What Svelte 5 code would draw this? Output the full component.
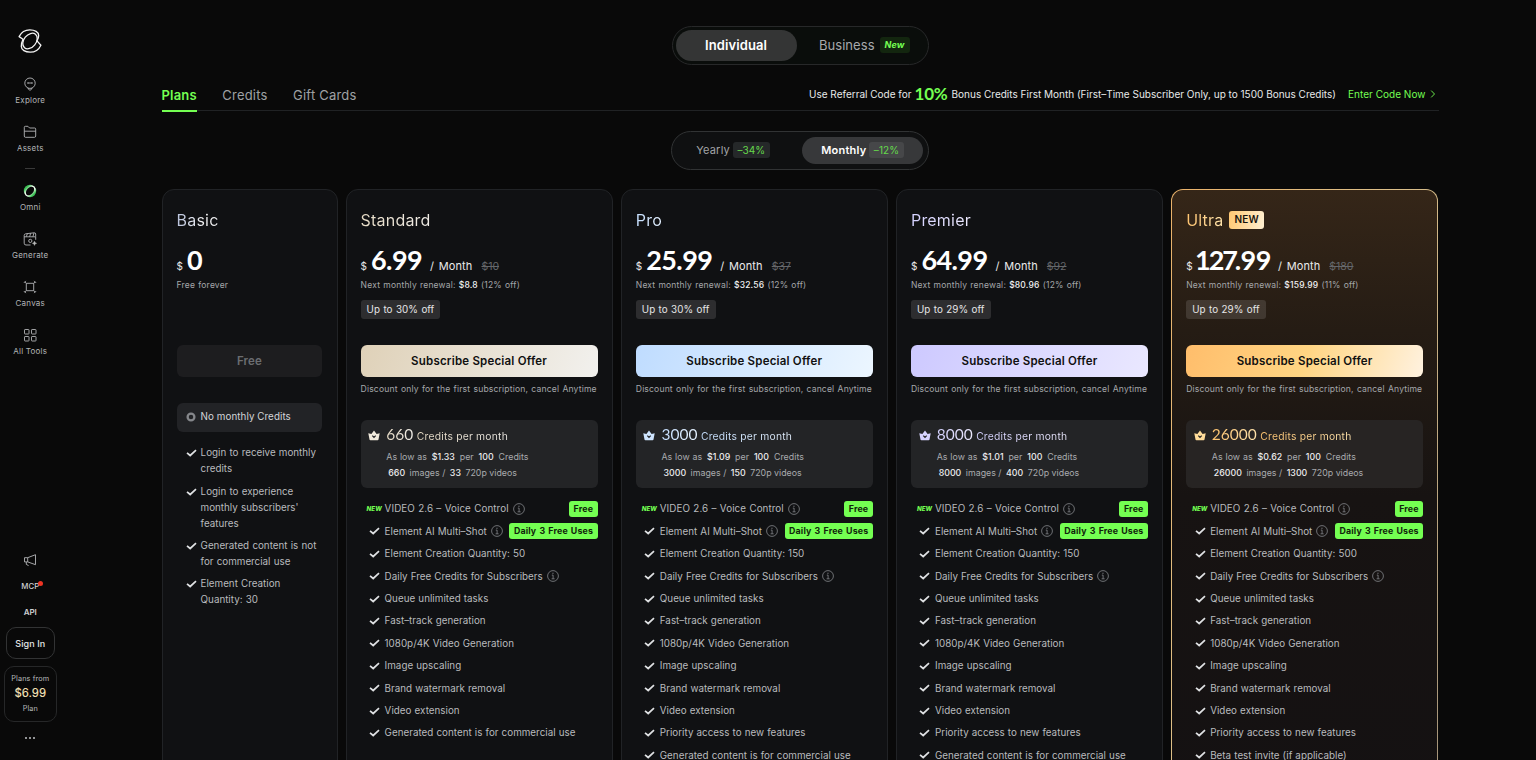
<script>
  const tail = ['Queue unlimited tasks', 'Fast–track generation', '1080p/4K Video Generation', 'Image upscaling', 'Brand watermark removal', 'Video extension'];
  const plans = [
    { id: 'standard', name: 'Standard', price: '6.99', old: '$10', renew: '$8.8', pct: '12', off: '30', credits: '660', per: '$1.33', videos: '33', qty: 50, more: ['Generated content is for commercial use'] },
    { id: 'pro', name: 'Pro', price: '25.99', old: '$37', renew: '$32.56', pct: '12', off: '30', credits: '3000', per: '$1.09', videos: '150', qty: 150, more: ['Priority access to new features', 'Generated content is for commercial use'] },
    { id: 'premier', name: 'Premier', price: '64.99', old: '$92', renew: '$80.96', pct: '12', off: '29', credits: '8000', per: '$1.01', videos: '400', qty: 150, more: ['Priority access to new features', 'Generated content is for commercial use'] },
    { id: 'ultra', name: 'Ultra', badge: 'NEW', price: '127.99', old: '$180', renew: '$159.99', pct: '11', off: '29', credits: '26000', per: '$0.62', videos: '1300', qty: 500, more: ['Priority access to new features', 'Beta test invite (if applicable)'] }
  ];
  const basic = ['Login to receive monthly credits', "Login to experience monthly subscribers'\u00a0 features", 'Generated content is not for commercial use', 'Element Creation Quantity: 30'];
</script>

{#snippet check()}
  <svg class="check" viewBox="0 0 11 8" width="11" height="8"><path d="M1 3.800 4.200 6.500 10 1.200" fill="none" stroke="#dfe1e3" stroke-width="1.700" /></svg>
{/snippet}
{#snippet info()}
  <svg class="info" viewBox="0 0 12 12" width="12" height="12" fill="none" stroke="#85888c" stroke-width=".8"><circle cx="6" cy="6" r="5.4" /><path d="M4.8 5.1h1.3v3.6M4.6 8.8h3" /><path d="M5.4 3.3h1.1" stroke-width="1.1" /></svg>
{/snippet}

<div class="page">
  <aside>
    <svg class="logo" viewBox="0 0 24 24" width="24" height="24" fill="none" stroke="#f4f4f4" stroke-width="1.3" stroke-linejoin="round">
      <path d="M5 10.200 1.100 7.600C3.200 3.300 7 .8 11.800.8c5 0 8.900 2.300 8.900 5.700 0 1.900-.5 3.600-1.700 5.400L22.900 16.200C20.800 20.700 17 23.200 12.200 23.200c-5 0-8.900-2.300-8.900-5.700 0-2.300.5-4.900 1.700-7.300z" />
      <ellipse cx="12" cy="12" rx="6.100" ry="8.700" transform="rotate(39 12 12)" />
    </svg>
    <div class="nav n1">
      <svg viewBox="0 0 14 14" width="14" height="14"><circle cx="7" cy="6.200" r="5.200" /><path d="M5.200 11v1L7 13.300l1.800-1.300v-1M4.900 5.200v1.600M9.100 5.200v1.600M4.900 6h4.200" /></svg><span>Explore</span>
    </div>
    <div class="nav">
      <svg viewBox="0 0 14 14" width="14" height="14"><path d="M1.300 11V2.400q0-1.100 1.100-1.100h2.500l1.700 1.700h5q1.100 0 1.100 1.100V11q0 1.300-1.200 1.300H2.400q-1.100 0-1.100-1.300zM1.300 6.200h11.400" /></svg><span>Assets</span>
    </div>
    <i class="rule"></i>
    <div class="nav omni">
      <svg viewBox="0 0 14 14" width="14" height="14"><defs><linearGradient id="og" x1="0" y1="0" x2="1" y2="1"><stop offset="0" stop-color="#2fb548" /><stop offset=".22" stop-color="#3fc257" /><stop offset=".42" stop-color="#f0fff0" /><stop offset=".58" stop-color="#f0fff0" /><stop offset=".78" stop-color="#3fc257" /><stop offset="1" stop-color="#2fb548" /></linearGradient></defs><circle cx="7" cy="7" r="6.200" fill="url(#og)" stroke="none" /><ellipse cx="7" cy="7" rx="3.200" ry="5" transform="rotate(42 7 7)" fill="#090909" stroke="none" /></svg><span>Omni</span>
    </div>
    <div class="nav">
      <svg viewBox="0 0 14 14" width="14" height="14"><path d="M7.500 13H3q-1.800 0-1.800-1.800V3.400Q1.200 2 2.600 1.800l8.600-1q1.400-.1 1.500 1.200v2.600M1.200 4.800h11.500v3M4.400 1.600 3.300 4.700M7.700 1.200 6.600 4.700M11 .9 9.900 4.700" /><circle cx="7.300" cy="8.900" r="1.600" /><path d="m11.500 9 .7 1.600 1.600.7-1.600.7-.7 1.600-.7-1.600-1.600-.7 1.600-.7z" fill="#bbb" stroke-width=".3" /></svg><span>Generate</span>
    </div>
    <div class="nav">
      <svg viewBox="0 0 14 14" width="14" height="14"><path d="M3.300 3.300h7.400v7.400H3.300z" /><path d="M.9 2.900 2.900.9M13.100 2.900l-2-2M.9 11.100l2 2M13.100 11.100l-2 2M1.800 2 3.300 3.300M12.200 2l-1.500 1.300M1.800 12l1.500-1.300M12.200 12l-1.500-1.300" stroke-width=".9" /></svg><span>Canvas</span>
    </div>
    <div class="nav">
      <svg viewBox="0 0 14 14" width="14" height="14"><rect x="1.500" y="1.500" width="4.500" height="4.500" rx=".6" /><rect x="8.500" y="1.500" width="4.500" height="4.500" rx=".6" /><rect x="1.500" y="8.500" width="4.500" height="4.500" rx=".6" /><rect x="8.500" y="8.500" width="4.500" height="4.500" rx=".6" /></svg><span>All Tools</span>
    </div>
    <div class="bottom">
      <svg class="horn" viewBox="0 0 14 14" width="14" height="14"><path d="M1.500 4.700h3.200l7.800-3v10L4.700 8.900H1.500zM4.700 4.700v4.200M3.300 9v2.400l2.300 1.200" /></svg>
      <div class="lnk mcp">MCP<i></i></div>
      <div class="lnk api">API</div>
      <div class="sign">Sign In</div>
      <div class="from"><span>Plans from</span><b>$6.99</b><span>Plan</span></div>
      <div class="dots"><i></i><i></i><i></i></div>
    </div>
  </aside>

  <main>
    <div class="seg top">
      <div class="on">Individual</div>
      <div class="off">Business<em>New</em></div>
    </div>
    <div class="tabs">
      <span class="tab act">Plans</span><span class="tab">Credits</span><span class="tab">Gift Cards</span>
      <div class="ref"><span class="r1">Use Referral Code for</span><b>10%</b><span class="r2">Bonus Credits First Month (First–Time Subscriber Only, up to 1500 Bonus Credits)</span><span class="go">Enter Code Now</span><svg viewBox="0 0 6 8" width="6" height="8"><path d="M1.200.6 4.500 4 1.200 7.400" fill="none" stroke="#74ff52" stroke-width=".9" /></svg></div>
    </div>
    <div class="seg period">
      <div class="off">Yearly<em>–34%</em></div>
      <div class="on">Monthly<em>–12%</em></div>
    </div>

    <div class="cards">
      <section class="card basic">
        <h2><span>Basic</span></h2>
        <div class="price"><small>$</small><strong>0</strong></div>
        <div class="sub">Free forever</div>
        <div class="tagrow"></div>
        <div class="btn">Free</div>
        <div class="none"><svg viewBox="0 0 10 10" width="10" height="10"><circle cx="5" cy="5" r="3.400" fill="none" stroke="#85878b" stroke-width="2.300" /></svg><span>No monthly Credits</span></div>
        <ul>
          {#each basic as t}<li>{@render check()}<span>{t}</span></li>{/each}
        </ul>
      </section>
      {#each plans as p}
        <section class="card {p.id}">
          <h2><span>{p.name}</span>{#if p.badge}<em>{p.badge}</em>{/if}</h2>
          <div class="price"><small>$</small><strong>{#each p.price as d}<span class:one={d === '1'} class:seven={d === '7'}>{d}</span>{/each}</strong><span class="mo">/ Month</span><s>{p.old}</s></div>
          <div class="sub">Next monthly renewal: <b>{p.renew}</b> ({p.pct}% off)</div>
          <div class="tagrow"><span>Up to {p.off}% off</span></div>
          <div class="btn">Subscribe Special Offer</div>
          <div class="note">Discount only for the first subscription, cancel Anytime</div>
          <div class="credits">
            <svg class="crown" viewBox="0 0 12 11" width="12" height="11"><path d="M.3 3.200 3.400 4 6 .5 8.600 4l3.100-.8-1.200 6.300q-.1.800-.9.800H2.400q-.8 0-.9-.8z" fill="currentColor" /><path d="M4.300 5.600 6 7.400 7.700 5.600" fill="none" stroke="#242527" stroke-width="1.200" /></svg>
            <div>
              <div class="c1"><strong>{p.credits}</strong><span>Credits per month</span></div>
              <div class="c2">As low as <b>{p.per}</b> per <b>100</b> Credits</div>
              <div class="c2 c3"><b>{p.credits}</b> images / <b>{p.videos}</b> 720p videos</div>
            </div>
          </div>
          <div class="feats">
            <div class="f"><i class="new">NEW</i><span>VIDEO 2.6 – Voice Control</span>{@render info()}<em>Free</em></div>
            <div class="f">{@render check()}<span>Element AI Multi–Shot</span>{@render info()}<em>Daily 3 Free Uses</em></div>
            <div class="f">{@render check()}<span>Element Creation Quantity: {p.qty}</span></div>
            <div class="f">{@render check()}<span>Daily Free Credits for Subscribers</span>{@render info()}</div>
            {#each [...tail, ...p.more] as t}<div class="f">{@render check()}<span>{t}</span></div>{/each}
          </div>
        </section>
      {/each}
    </div>
  </main>
</div>

<style>
  :global(body) { background: #090909; overflow: hidden; }
  * { box-sizing: border-box; }
  .page { width: 1536px; height: 760px; overflow: hidden; display: flex; background: #090909; color: #fff; font-family: Inter, "Liberation Sans", sans-serif; white-space: nowrap; }
  em, i { font-style: normal; }
  svg { flex: none; display: block; }

  aside { width: 61px; height: 760px; display: flex; flex-direction: column; align-items: center; padding: 29px .5px 0 0; flex: none; }
  .nav { height: 48px; display: flex; flex-direction: column; align-items: center; font-size: 8px; letter-spacing: .22px; line-height: 10px; color: #b3b5b7; flex: none; gap: 4px; }
  .nav svg { fill: none; stroke: #b4b6b8; stroke-width: .9; }
  .n1 { margin-top: 24.300px; }
  .rule { width: 10px; height: 1px; background: #3a3a3a; margin: -5.300px 0 15px; flex: none; }
  .bottom { margin-top: auto; display: flex; flex-direction: column; align-items: center; width: 60.500px; }
  .horn { fill: none; stroke: #b4b6b8; stroke-width: .9; }
  .lnk { position: relative; font-size: 8px; line-height: 10px; font-weight: 600; color: #cfd1d3; letter-spacing: 0; }
  .mcp { margin-top: 14px; font-weight: 500; font-size: 7.800px; }
  .mcp i { position: absolute; width: 5px; height: 5px; border-radius: 50%; background: #ee3423; right: -4px; top: 0; }
  .api { margin-top: 15.500px; }
  .sign { margin-top: 10.500px; width: 49px; height: 32px; border: 1px solid #323334; border-radius: 10px; font-size: 9px; line-height: 31px; text-align: center; color: #e4e5e6; letter-spacing: .1px; font-weight: 500; }
  .from { margin-top: 7px; width: 53px; height: 56px; border: 1px solid #262728; border-radius: 10px; display: flex; flex-direction: column; align-items: center; padding-top: 6px; font-size: 7.300px; color: #b7b9bb; letter-spacing: .1px; }
  .from span { line-height: 11px; }
  .from b { font-size: 11.300px; line-height: 19px; font-weight: 500; color: #eedfb0; letter-spacing: 0; }
  .dots { display: flex; gap: 2px; margin: 15px 0 21px; }
  .dots i { width: 2px; height: 2px; border-radius: 50%; background: #c0c2c4; }

  main { margin-left: 100.500px; width: 1277px; display: flex; flex-direction: column; align-items: center; padding-top: 26px; flex: none; }
  .seg { display: flex; border: 1px solid #272829; border-radius: 20px; flex: none; }
  .seg > div { display: flex; align-items: center; justify-content: center; }
  .top { width: 257px; height: 39px; padding: 3px; background: #0a0d0b; }
  .top > div { padding-bottom: 1px; }
  .top .on { width: 121px; height: 31px; border-radius: 16px; background: #343535; font-size: 13px; font-weight: 600; letter-spacing: .1px; }
  .top .off { flex: 1; padding-left: 7.500px; font-size: 13px; color: #a7a9ab; letter-spacing: .05px; gap: 5px; }
  .top em { width: 30px; height: 16px; border-radius: 3px; background: #13260f; color: #74ff52; font-size: 9px; line-height: 16px; text-align: center; font-weight: 700; font-style: italic; }
  .tabs { width: 1277px; height: 46px; border-bottom: 1px solid #202224; display: flex; padding-top: 20px; flex: none; gap: 25.500px; font-size: 13px; line-height: 20px; color: #9fa1a4; letter-spacing: .2px; }
  .tab { height: 26.500px; }
  .act { color: #74ff52; font-weight: 600; border-bottom: 2px solid #74ff52; }
  .ref { margin-left: auto; display: flex; align-items: center; height: 20px; margin-top: -1px; font-size: 10px; color: #e8e9ea; padding-right: 3px; letter-spacing: 0; }
  .ref b { color: #74ff52; font-family: Lato, sans-serif; font-size: 17px; margin: 0 4px 0 3px; letter-spacing: -.2px; }
  .go { color: #74ff52; margin: 0 4px 0 12px; letter-spacing: .03px; }
  .period { margin-top: 20px; width: 258px; height: 39px; padding: 5px; background: #0f1011; border-color: #313334; }
  .period > div { width: 121px; height: 27px; gap: 3px; font-size: 11px; letter-spacing: .2px; padding-bottom: 1px; }
  .period .off { color: #a2a4a7; width: 112px; }
  .period .on { background: #37383a; border-radius: 14px; font-weight: 600; margin-left: auto; }
  .period em { background: #252829; color: #65d94b; font-size: 10px; height: 16px; line-height: 16px; border-radius: 3px; padding: 0 4.500px; font-weight: 400; letter-spacing: .1px; }
  .period .on em { background: #464749; padding: 0 4.500px; }

  .cards { margin-top: 19px; width: 1277px; display: grid; grid-template-columns: 176px repeat(4, 267.200px); gap: 8px; flex: none; }
  .card { height: 640px; border: 1px solid #212326; border-radius: 12px; background: #101113; padding: 18px 14.100px 0; --tint: linear-gradient(90deg, #b9c3dc, #f0f0f2 60%); }
  .card h2 { margin: 0; display: flex; align-items: center; height: 24px; font-size: 16px; font-weight: 400; gap: 5.500px; letter-spacing: .2px; }
  .card h2 span { background: var(--tint); background-clip: text; color: transparent; }
  h2 em { background: linear-gradient(100deg, #ffc873, #fff0d2); color: #17130d; font-size: 10px; font-weight: 600; line-height: 17px; height: 17.500px; padding: 0 5.500px; border-radius: 3px; }
  .price { display: flex; align-items: baseline; height: 36px; margin-top: 13px; line-height: 30px; }
  .price small { font-size: 10px; margin-right: 4px; color: #e8e8e8; }
  .price strong { font: 700 27px/30px Lato, sans-serif; letter-spacing: -.6px; }
  .price .one { margin: 0 -1.500px 0 -1.500px; }
  .price .seven { margin: 0 -2.500px 0 -1.500px; }
  .mo { font-size: 11px; margin-left: 8px; color: #ebebeb; letter-spacing: .1px; word-spacing: 1.500px; }
  .ultra .mo { margin-left: 7.200px; }
  .price s { font-size: 10.500px; color: #65676a; margin-left: 9px; }
  .sub { font-size: 8.500px; line-height: 12px; color: #a5a7aa; margin-top: -2px; letter-spacing: .2px; word-spacing: .5px; }
  .sub b { color: #f2f2f2; font-weight: 500; }
  .tagrow { height: 54px; padding-top: 9px; display: flex; align-items: flex-start; }
  .tagrow span { height: 19px; line-height: 19px; padding: 0 6px; font-size: 9.800px; background: #ffffff1f; border-radius: 3px; color: #e6e6e7; letter-spacing: .06px; word-spacing: .6px; }
  .btn { height: 32px; border-radius: 6px; line-height: 32px; text-align: center; font-size: 11.500px; font-weight: 600; color: #101010; letter-spacing: .2px; }
  .basic .btn { background: #1d1d1f; color: #6b6d71; font-size: 11.500px; }
  .note { font-size: 8.600px; line-height: 12px; margin-top: 6px; color: #a5a7aa; letter-spacing: .15px; word-spacing: .7px; }
  .none { margin-top: 25.500px; height: 29px; background: #222326; border-radius: 6px; display: flex; align-items: center; padding-left: 9px; gap: 5px; font-size: 9.800px; color: #d3d5d8; letter-spacing: .07px; }
  .none span { margin-top: -1px; }
  ul { list-style: none; margin: 13.700px 0 0; padding: 0 0 0 9px; display: flex; flex-direction: column; gap: 6.400px; white-space: normal; }
  li { display: flex; gap: 4px; font-size: 9.800px; line-height: 16px; color: #b9bbbe; word-spacing: .5px; }
  li .check { margin-top: 4px; }
  .credits { margin-top: 25px; height: 68px; border-radius: 6px; background: #232426; display: flex; padding: 5px 0 0 7.700px; gap: 6px; }
  .crown { margin-top: 5px; color: var(--c); }
  .c1 { display: flex; align-items: baseline; height: 24.300px; line-height: 18px; gap: 3.500px; }
  .c1 strong, .c1 span { background: var(--tint); background-clip: text; color: transparent; }
  .c1 strong { font: 400 15.500px/18px Lato, sans-serif; }
  .c1 span { font-size: 10.300px; letter-spacing: .22px; }
  .c2 { font-size: 8.800px; line-height: 16px; height: 16px; color: #a9abae; letter-spacing: .05px; word-spacing: .3px; }
  .c2 b { color: #ededee; font-weight: 500; margin: 0 2px; }
  .c3 { letter-spacing: .02px; word-spacing: 0; }
  .feats { margin-top: 9.800px; }
  .f { display: flex; align-items: center; height: 22.400px; padding-left: 8.500px; font-size: 9.800px; color: #b9bbbe; letter-spacing: .03px; word-spacing: .3px; }
  .f > span { margin-left: 4.500px; }
  .new { width: 19px; margin-left: -2.500px; margin-right: -5.500px; font-size: 6.200px; font-weight: 800; font-style: italic; color: #74ff52; letter-spacing: 0; }
  .new + span { letter-spacing: .08px; word-spacing: .5px; }
  .info { margin-left: 4px; }
  .f em { margin-left: auto; background: #74ff52; color: #10240b; font-weight: 700; font-size: 8.800px; height: 16px; line-height: 16px; border-radius: 3px; padding: 0 4.500px; letter-spacing: .17px; word-spacing: .8px; }
  .standard { --tint: linear-gradient(90deg, #e8dcc6, #f0ede7); --c: #f1eadc; }
  .standard .btn { background: linear-gradient(110deg, #dfd1b8, #f2f1ee); }
  .pro { --tint: linear-gradient(90deg, #c5dfff, #e5f1ff); --c: #cfe5ff; }
  .pro .btn { background: linear-gradient(110deg, #bfdcff, #ecf6ff); }
  .premier { --tint: linear-gradient(90deg, #d4d1ff, #edeaff); --c: #d7d3ff; }
  .premier .btn { background: linear-gradient(110deg, #cdc9ff, #eae8ff); }
  .ultra { --tint: linear-gradient(90deg, #ffc46f, #ffe3ab); --c: #ffdc9a; border-color: transparent; background: linear-gradient(#352618, #251c14 22%, #171312 48%, #141112) padding-box, linear-gradient(110deg, #eab26a, #dcc08a 45%, #a09078) border-box; }
  .ultra .btn { background: linear-gradient(110deg, #ffbd6b, #ffd583 50%, #fff2e0); }
  .ultra .credits { background: #272423; }
</style>
